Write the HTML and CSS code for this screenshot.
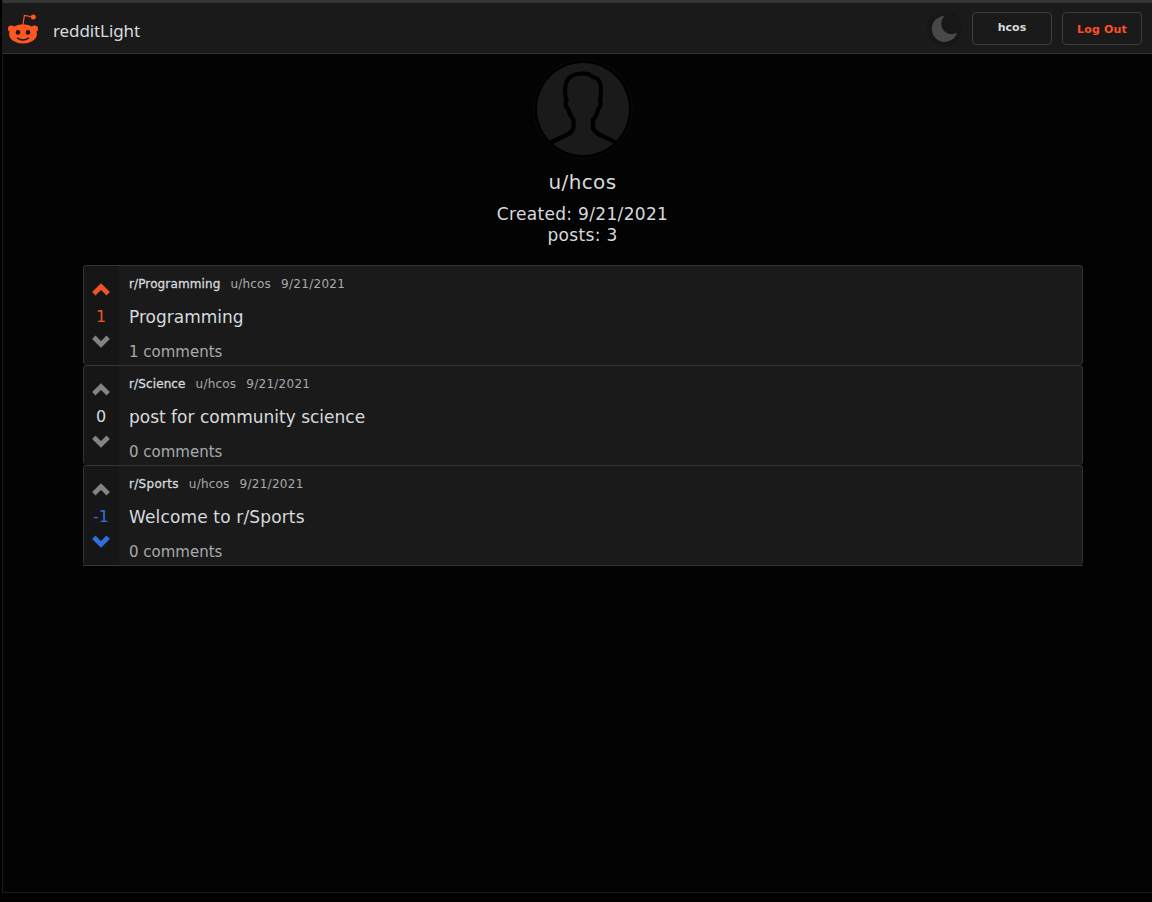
FILE: index.html
```html
<!DOCTYPE html>
<html lang="en">
<head>
<meta charset="utf-8">
<title>redditLight</title>
<link rel="stylesheet" href="styles.css">
</head>
<body>
<svg class="sprite" aria-hidden="true">
  <symbol id="up" viewBox="0 0 20 14"><path d="M2.800 10.700 10 3.600l7.200 7.100" fill="none" stroke="currentColor" stroke-width="4.800"/></symbol>
  <symbol id="down" viewBox="0 0 20 14"><path d="M2.800 2.300 10 9.400l7.200-7.100" fill="none" stroke="currentColor" stroke-width="4.800"/></symbol>
</svg>
<div class="frame">
  <header class="nav">
    <svg class="logo" viewBox="0 0 32 32">
      <g fill="#ff5722">
        <circle cx="4.300" cy="15.800" r="3.300"/><circle cx="27.700" cy="15.800" r="3.300"/>
        <ellipse cx="16" cy="20.900" rx="13.900" ry="9.700"/>
        <circle cx="26.300" cy="4" r="2.500"/>
      </g>
      <path d="M15.800 12 17.400 2.500 26 4" fill="none" stroke="#ff5722" stroke-width="1.200"/>
      <circle cx="11" cy="19.400" r="2.300" fill="#1a1a1b"/><circle cx="21" cy="19.400" r="2.300" fill="#1a1a1b"/>
      <path d="M10.500 25.200q5.500 3.700 11 0" fill="none" stroke="#1a1a1b" stroke-width="1.400" stroke-linecap="round"/>
    </svg>
    <span class="brand">redditLight</span>
    <div class="theme"><svg viewBox="0 0 35 35"><path d="M17.700 4.900A13 13 0 1 0 30.200 21.800C22.500 25.500 14.300 20.800 14.300 12.500Q14.300 8 17.700 4.900Z" fill="#484848"/></svg></div>
    <a class="btn user">hcos</a>
    <a class="btn logout">Log Out</a>
  </header>
  <main>
    <section class="profile">
      <svg class="avatar" viewBox="0 0 100 100">
        <circle cx="50" cy="50" r="49.300" fill="#000" stroke="#0c0c0c" stroke-width="1"/>
        <circle cx="50" cy="50" r="46" fill="#1a1a1b"/>
        <path d="M17.500 84C26 78 40.500 76 40.500 68V61C38 57.500 36 54 35.500 50.500C33 49 31.500 44 33.500 42C32 36 32 30 32.500 27C33.500 18 41 14.500 50 14.500C55 14.500 58 16 59.500 18C66 18.500 68.500 25 68 31C68 35 68 39 66.800 42C68.500 44 67 49 65 50.500C64.500 54 62.500 58 60 61V68C60.500 76 75 78 83 84" fill="none" stroke="#000" stroke-width="4.200" stroke-linejoin="round"/>
      </svg>
      <h1>u/hcos</h1>
      <p>Created: 9/21/2021</p>
      <p class="count">posts: 3</p>
    </section>
    <section class="posts">
      <article class="post">
        <div class="votes"><svg class="orange"><use href="#up"/></svg><span class="orange">1</span><svg><use href="#down"/></svg></div>
        <div class="body">
          <div class="meta"><b>r/Programming</b><span class="author">u/hcos</span><span class="date">9/21/2021</span></div>
          <h2>Programming</h2><div class="comments">1 comments</div>
        </div>
      </article>
      <article class="post">
        <div class="votes"><svg><use href="#up"/></svg><span>0</span><svg><use href="#down"/></svg></div>
        <div class="body">
          <div class="meta"><b>r/Science</b><span class="author">u/hcos</span><span class="date">9/21/2021</span></div>
          <h2>post for community science</h2><div class="comments">0 comments</div>
        </div>
      </article>
      <article class="post">
        <div class="votes"><svg><use href="#up"/></svg><span class="blue">-1</span><svg class="blue"><use href="#down"/></svg></div>
        <div class="body">
          <div class="meta"><b class="sports">r/Sports</b><span class="author">u/hcos</span><span class="date">9/21/2021</span></div>
          <h2 class="welcome">Welcome to r/Sports</h2><div class="comments">0 comments</div>
        </div>
      </article>
    </section>
  </main>
</div>
</body>
</html>
```
FILE: styles.css
```css
* { box-sizing: border-box; }
body { margin: 0; height: 902px; overflow: hidden; padding-left: 2px; background: #000; color: #d7dadc; font-family: "DejaVu Sans", Verdana, sans-serif; }
.sprite { display: none; }
.frame { height: 893px; border-top: 3px solid #333535; border-left: 1px solid #1a1a1b; border-bottom: 1px solid #1a1a1b; background: #030303; }
.nav { height: 51px; padding: 0 10px 0 4px; display: flex; align-items: center; background: #1a1a1b; border-bottom: 1px solid #343536; }
.logo { width: 32px; height: 32px; margin-top: 2px; }
.brand { margin: 6px auto 0 14px; font: 17px/24px "Noto Sans", sans-serif; letter-spacing: -.1px; }
.theme { width: 35px; height: 35px; margin-right: 10px; border-radius: 50%; background: #171718; }
.theme svg { display: block; }
.btn { width: 80px; height: 33px; border: 1px solid #3c3d3e; border-radius: 4px; text-align: center; font-size: 11px; font-weight: bold; line-height: 30px; }
.logout { margin-left: 10px; color: #ff4f22; line-height: 33px; letter-spacing: .15px; }
.profile { display: flex; flex-direction: column; align-items: center; padding: 5px 0 0 10px; height: 211px; }
.avatar { width: 100px; height: 100px; }
h1 { margin: 11px 0 0; font-size: 20px; line-height: 24px; font-weight: normal; letter-spacing: .35px; }
p { margin: 10px 0 0; font-size: 17px; line-height: 21px; letter-spacing: .33px; }
.count { margin: 0; }
.posts { width: 1000px; margin-left: 80px; border-bottom: 1px solid #343536; }
.post { display: flex; height: 100px; border: 1px solid #343536; border-bottom: 0; border-radius: 4px; background: #1a1a1b; overflow: hidden; }
.votes { width: 35px; padding: 17px 1px 0 0; background: #161617; display: flex; flex-direction: column; align-items: center; font-size: 16px; line-height: 20px; }
.votes svg { width: 20px; height: 14px; color: #818384; }
.votes span { margin: 10px 0 8px; }
.votes .orange { color: #f0532a; }
.votes .blue { color: #2f70dc; }
.body { padding: 10px 0 0 10px; }
.meta { display: flex; gap: 10px; font-size: 12px; line-height: 16px; color: #a8aaab; }
.meta b { font-weight: normal; color: #d7dadc; letter-spacing: .12px; -webkit-text-stroke: .3px #d7dadc; }
.meta .sports { letter-spacing: .3px; }
.author { letter-spacing: .2px; }
.date { letter-spacing: .28px; }
h2 { margin: 15px 0 0; font-size: 17px; line-height: 20px; font-weight: normal; }
.welcome { letter-spacing: .15px; }
.comments { margin-top: 16px; font-size: 15px; line-height: 18px; color: #a8aaab; }
```
